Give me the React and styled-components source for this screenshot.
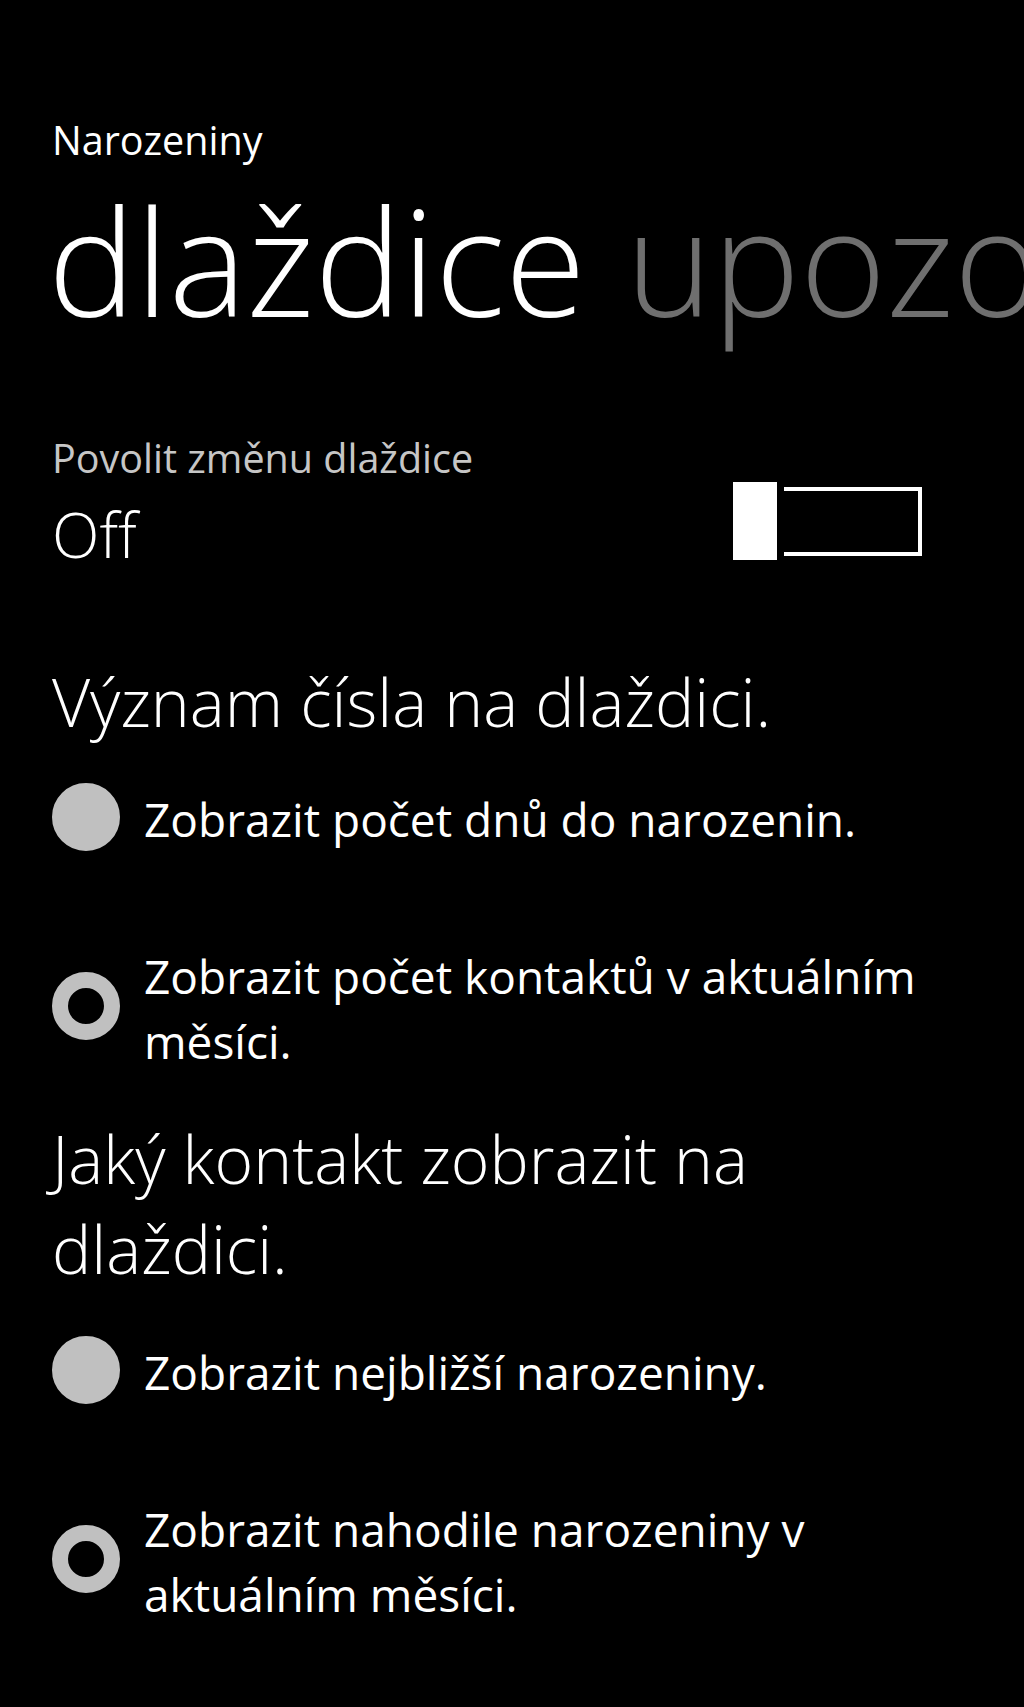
import React from "react";
import styled, { createGlobalStyle } from "styled-components";

const GlobalStyle = createGlobalStyle`
  html, body {
    margin: 0;
    padding: 0;
    background: #000;
    overflow-x: hidden;
  }
`;

const App = () => {
  return (
    <Page>
      <GlobalStyle />
      <AppTitle>Narozeniny</AppTitle>

      <PivotHeader>
        <PivotItem active>dlaždice</PivotItem>
        <PivotItem>upozornění</PivotItem>
      </PivotHeader>

      <SettingRow>
        <SettingText>
          <SettingLabel>Povolit změnu dlaždice</SettingLabel>
          <SettingValue>Off</SettingValue>
        </SettingText>
        <ToggleSwitch>
          <ToggleKnob />
          <ToggleTrack />
        </ToggleSwitch>
      </SettingRow>

      <GroupHeading top={86}>Význam čísla na dlaždici.</GroupHeading>
      <RadioGroup top={41}>
        <RadioOption>
          <RadioMark />
          <RadioLabel>Zobrazit počet dnů do narozenin.</RadioLabel>
        </RadioOption>
        <RadioOption>
          <RadioMark checked />
          <RadioLabel>
            Zobrazit počet kontaktů v aktuálním
            <br />
            měsíci.
          </RadioLabel>
        </RadioOption>
      </RadioGroup>

      <GroupHeading top={39}>
        Jaký kontakt zobrazit na
        <br />
        dlaždici.
      </GroupHeading>
      <RadioGroup top={47}>
        <RadioOption>
          <RadioMark />
          <RadioLabel>Zobrazit nejbližší narozeniny.</RadioLabel>
        </RadioOption>
        <RadioOption>
          <RadioMark checked />
          <RadioLabel>
            Zobrazit nahodile narozeniny v
            <br />
            aktuálním měsíci.
          </RadioLabel>
        </RadioOption>
      </RadioGroup>
    </Page>
  );
};

export default App;

// Styled Components
const Page = styled.div`
  min-height: 1707px;
  box-sizing: border-box;
  padding: 117px 0 0 52px;
  background: #000;
  color: #fff;
  font-family: "Open Sans", "Noto Sans", sans-serif;
  overflow: hidden;
`;

const AppTitle = styled.div`
  font-size: 39.5px;
  line-height: 46px;
  font-weight: 400;
  color: #fff;
`;

const PivotHeader = styled.div`
  display: flex;
  gap: 40px;
  margin-top: 22px;
  margin-left: -4px;
  white-space: nowrap;
`;

const PivotItem = styled.div`
  font-size: 147px;
  line-height: 150px;
  font-weight: 300;
  color: ${(p) => (p.active ? "#fff" : "#6f6f6f")};
`;

const SettingRow = styled.div`
  display: flex;
  justify-content: space-between;
  align-items: flex-end;
  padding-right: 102px;
  margin-top: 103px;
`;

const SettingText = styled.div`
  display: flex;
  flex-direction: column;
  gap: 20px;
`;

const SettingLabel = styled.div`
  font-size: 39.5px;
  line-height: 40px;
  color: #c6c6c6;
`;

const SettingValue = styled.div`
  font-size: 62px;
  line-height: 72px;
  font-weight: 300;
  color: #fff;
`;

const ToggleSwitch = styled.div`
  display: flex;
  align-items: center;
  gap: 7px;
  margin-bottom: 10px;
`;

const ToggleKnob = styled.div`
  width: 44px;
  height: 78px;
  background: #fff;
`;

const ToggleTrack = styled.div`
  width: 134px;
  height: 61px;
  border: 4px solid #fff;
  border-left: none;
`;

const GroupHeading = styled.div`
  margin-top: ${(p) => p.top}px;
  font-size: 66px;
  line-height: 90px;
  font-weight: 300;
  color: #fff;
`;

const RadioGroup = styled.div`
  display: flex;
  flex-direction: column;
  gap: 92px;
  margin-top: ${(p) => p.top}px;
`;

const RadioOption = styled.div`
  display: flex;
  align-items: center;
  gap: 24px;
`;

const RadioMark = styled.div`
  flex: none;
  box-sizing: border-box;
  width: 68px;
  height: 68px;
  border-radius: 50%;
  background: ${(p) => (p.checked ? "transparent" : "#c0c0c0")};
  border: 16px solid #c0c0c0;
  margin-top: -6px;
`;

const RadioLabel = styled.div`
  font-size: 46px;
  line-height: 65px;
  color: #fff;
`;
